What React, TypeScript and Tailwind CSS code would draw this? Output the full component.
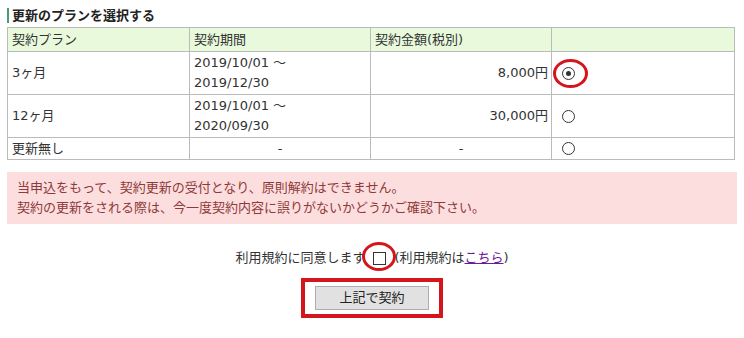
import React from "react";

const font = {
  fontFamily: '"DejaVu Sans", "Noto Sans CJK JP", sans-serif',
};

type Plan = {
  name: string;
  period: string[];
  price: string;
  checked: boolean;
};

const plans: Plan[] = [
  { name: "3ヶ月", period: ["2019/10/01 ～", "2019/12/30"], price: "8,000円", checked: true },
  { name: "12ヶ月", period: ["2019/10/01 ～", "2020/09/30"], price: "30,000円", checked: false },
  { name: "更新無し", period: [], price: "-", checked: false },
];

function Radio({ checked }: { checked: boolean }) {
  return (
    <span className="flex h-[13px] w-[13px] items-center justify-center rounded-full border border-[#333] bg-white">
      {checked && <span className="h-[5px] w-[5px] rounded-full bg-[#333]" />}
    </span>
  );
}

export default function App() {
  return (
    <div
      className="h-[338px] w-[744px] overflow-hidden bg-white px-[7px] pt-[8px] text-[13px] leading-[20px] text-[#333]"
      style={font}
    >
      <h2 className="mb-[4px] border-l-2 border-[#4a9a7a] pl-[3px] text-[13px] font-bold leading-[15px] text-[#222]">
        更新のプランを選択する
      </h2>

      <table className="w-[727px] table-fixed border-collapse border border-[#bbb]">
        <colgroup>
          <col className="w-[182px]" />
          <col className="w-[181px]" />
          <col className="w-[181px]" />
          <col className="w-[183px]" />
        </colgroup>
        <thead>
          <tr className="h-[24px] bg-[#e9fadc] text-left">
            <th className="border border-[#bbb] px-[4px] font-normal">契約プラン</th>
            <th className="border border-[#bbb] px-[4px] font-normal">契約期間</th>
            <th className="border border-[#bbb] px-[4px] font-normal">契約金額(税別)</th>
            <th className="border border-[#bbb] px-[4px] font-normal"></th>
          </tr>
        </thead>
        <tbody>
          {plans.map((plan) => (
            <tr key={plan.name} className={plan.period.length ? "h-[43px]" : "h-[22px]"}>
              <td className="border border-[#bbb] px-[4px] align-middle">{plan.name}</td>
              <td className={`border border-[#bbb] px-[4px] align-middle ${plan.period.length ? "" : "text-center"}`}>
                {plan.period.length ? (
                  plan.period.map((line) => <div key={line}>{line}</div>)
                ) : (
                  "-"
                )}
              </td>
              <td className={`border border-[#bbb] px-[3px] align-middle ${plan.period.length ? "text-right" : "text-center"}`}>
                {plan.price}
              </td>
              <td className="relative border border-[#bbb] pl-[10px] align-middle">
                <Radio checked={plan.checked} />
                {plan.checked && (
                  <span className="absolute left-[1px] top-[7px] h-[29px] w-[35px] rounded-[50%] border-[3px] border-[#d4161c]" />
                )}
              </td>
            </tr>
          ))}
        </tbody>
      </table>

      <div className="mt-[12px] h-[52px] bg-[#fddede] px-[10px] py-[6px] text-[#8e3a3a]">
        <p>当申込をもって、契約更新の受付となり、原則解約はできません。</p>
        <p>契約の更新をされる際は、今一度契約内容に誤りがないかどうかご確認下さい。</p>
      </div>

      <div className="mt-[24px] flex flex-col items-center">
        <div className="flex items-center">
          <span>利用規約に同意します</span>
          <span className="relative mx-[6px] flex h-[20px] w-[17px] items-center justify-center">
            <span className="h-[13px] w-[13px] border border-[#333] bg-white" />
            <span className="absolute left-[-9px] top-[-6px] h-[29px] w-[34px] rounded-[50%] border-[3px] border-[#d4161c]" />
          </span>
          <span>
            (利用規約は
            <a className="text-[#6a1b9a] underline">こちら</a>)
          </span>
        </div>
        <div className="mt-[10px] border-4 border-[#d4161c] px-[10px] py-[4px]">
          <button className="h-[24px] w-[114px] border border-[#adadad] bg-[#e1e1e1] text-[13px] text-[#222]">
            上記で契約
          </button>
        </div>
      </div>
    </div>
  );
}
